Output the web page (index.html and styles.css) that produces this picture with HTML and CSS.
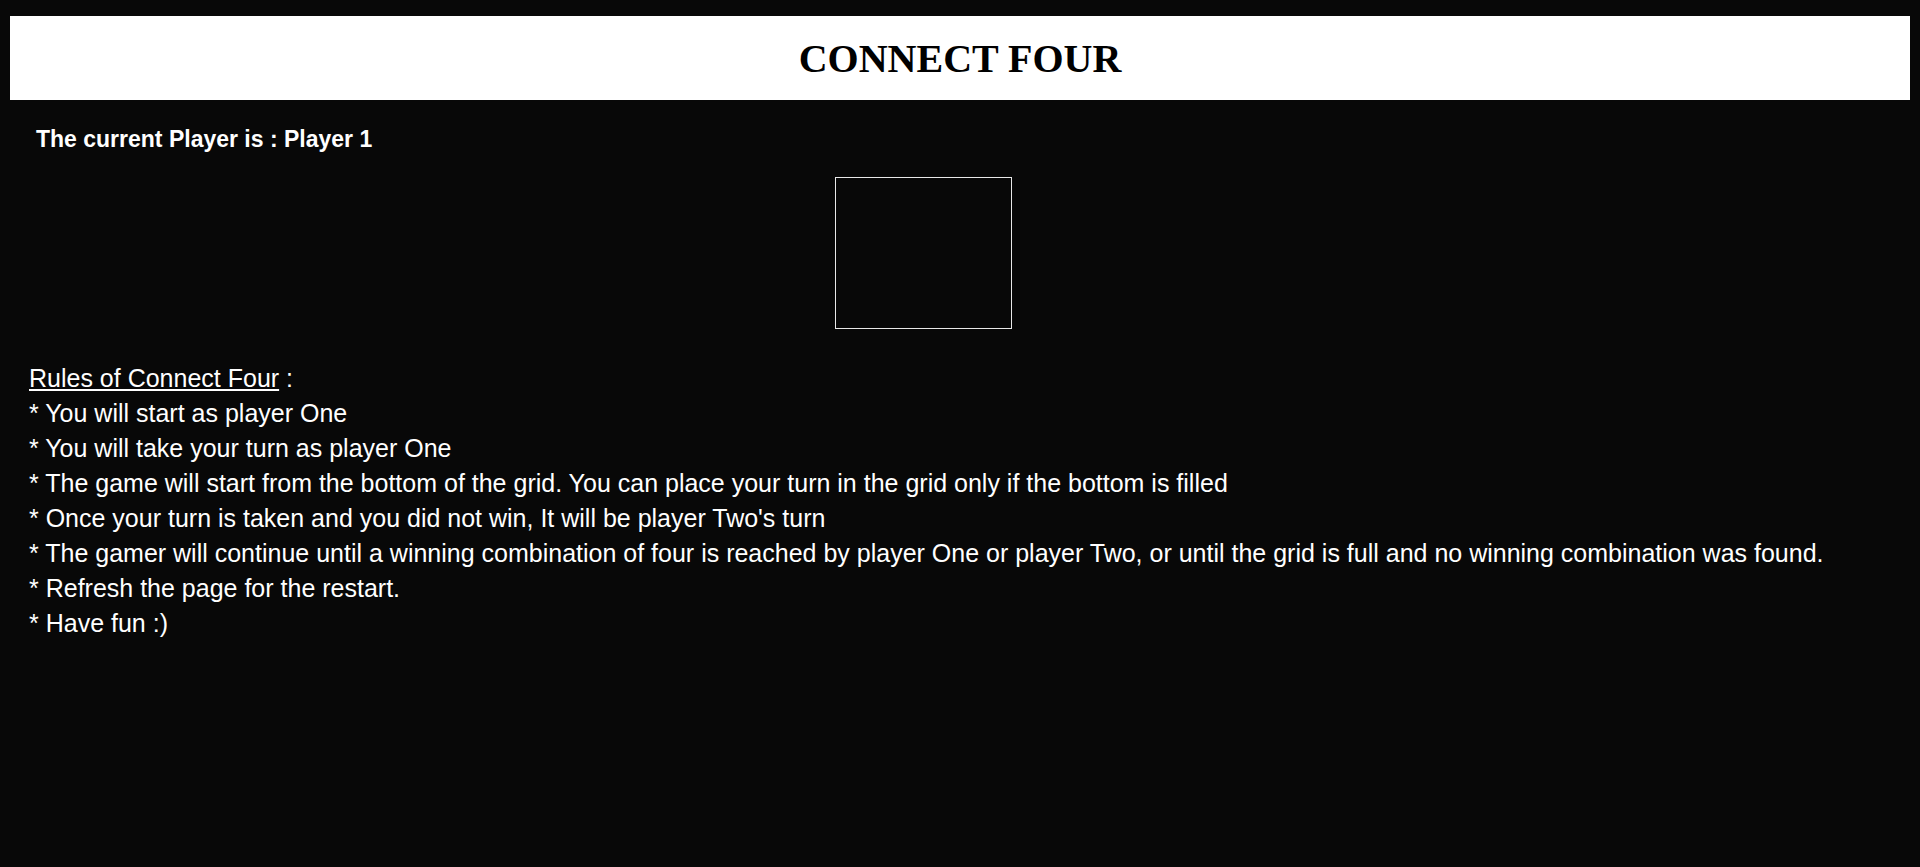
FILE: index.html
```html
<!DOCTYPE html>
<html>
<head>
<meta charset="utf-8">
<link rel="stylesheet" href="styles.css">
</head>
<body>
<header class="banner"><h1 class="title">CONNECT FOUR</h1></header>
<div class="status">The current Player is : Player 1</div>
<div class="board-wrap"><div class="board"></div></div>
<div class="rules">
<div><span class="rules-title">Rules of Connect Four</span> :</div>
<div>* You will start as player One</div>
<div>* You will take your turn as player One</div>
<div>* The game will start from the bottom of the grid. You can place your turn in the grid only if the bottom is filled</div>
<div>* Once your turn is taken and you did not win, It will be player Two's turn</div>
<div>* The gamer will continue until a winning combination of four is reached by player One or player Two, or until the grid is full and no winning combination was found.</div>
<div>* Refresh the page for the restart.</div>
<div>* Have fun :)</div>
</div>
</body>
</html>
```

FILE: styles.css
```css
html, body {
  margin: 0;
  padding: 0;
  background: #080808;
  color: #fff;
}
body {
  padding: 16px 10px 0 10px;
  font-family: "Liberation Sans", Arial, sans-serif;
}
.banner {
  background: #fff;
  height: 84px;
  display: flex;
  align-items: center;
  justify-content: center;
}
.title {
  margin: 0;
  color: #000;
  font-family: "Liberation Serif", "Times New Roman", serif;
  font-weight: bold;
  font-size: 40px;
}
.status {
  margin-top: 26px;
  padding-left: 26px;
  font-weight: bold;
  font-size: 23px;
  line-height: 26px;
}
.board-wrap {
  margin-top: 25px;
  padding-left: 825px;
}
.board {
  width: 175px;
  height: 150px;
  border: 1px solid #e8e8e8;
}
.rules {
  margin-top: 32px;
  padding-left: 19px;
  font-size: 25px;
  line-height: 35px;
}
.rules-title {
  text-decoration: underline;
}
```
